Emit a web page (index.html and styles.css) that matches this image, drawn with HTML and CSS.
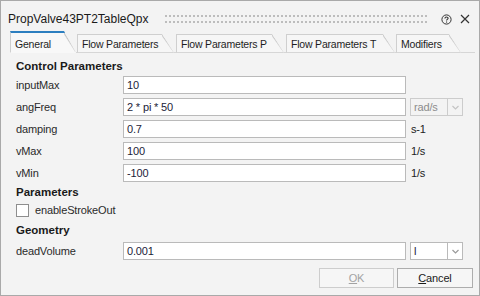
FILE: index.html
```html
<!DOCTYPE html>
<html>
<head>
<meta charset="utf-8">
<link rel="stylesheet" href="styles.css">
</head>
<body>
<div class="window">
  <div class="titlebar">
    <span class="title">PropValve43PT2TableQpx</span>
    <span class="grip"></span>
    <svg class="help" width="11" height="11" viewBox="0 0 11 11">
      <circle cx="5.5" cy="5.5" r="4.6" fill="none" stroke="#333" stroke-width="1"/>
      <path d="M3.9 4.4 C3.9 2.6 7.1 2.6 7.1 4.3 C7.1 5.4 5.5 5.4 5.5 6.6" fill="none" stroke="#333" stroke-width="1.1"/>
      <rect x="5" y="7.5" width="1.1" height="1.1" fill="#333"/>
    </svg>
    <svg class="close" width="10" height="10" viewBox="0 0 10 10">
      <path d="M1 1 L9 9 M9 1 L1 9" stroke="#333" stroke-width="1.2"/>
    </svg>
  </div>
  <div class="tabs">
    <div class="tab active">General</div>
    <div class="tab">Flow Parameters</div>
    <div class="tab">Flow Parameters P</div>
    <div class="tab">Flow Parameters T</div>
    <div class="tab">Modifiers</div>
  </div>
  <div class="pane">
    <div class="section">Control Parameters</div>
    <div class="rows">
      <div class="row"><span class="label">inputMax</span><span class="input">10</span><span class="unit"></span></div>
      <div class="row"><span class="label">angFreq</span><span class="input">2 * pi * 50</span>
        <span class="combo disabled"><span class="combo-text">rad/s</span><span class="combo-btn"><svg width="7" height="5" viewBox="0 0 7 5"><path d="M0.5 1 L3.5 4 L6.5 1" fill="none" stroke="#c4c4c4" stroke-width="1.2"/></svg></span></span></div>
      <div class="row"><span class="label">damping</span><span class="input">0.7</span><span class="unit">s-1</span></div>
      <div class="row"><span class="label">vMax</span><span class="input">100</span><span class="unit">1/s</span></div>
      <div class="row"><span class="label">vMin</span><span class="input">-100</span><span class="unit">1/s</span></div>
    </div>
    <div class="section sec-params">Parameters</div>
    <div class="check-row"><span class="checkbox"></span><span class="check-label">enableStrokeOut</span></div>
    <div class="section sec-geom">Geometry</div>
    <div class="rows rows-geom">
      <div class="row"><span class="label">deadVolume</span><span class="input">0.001</span>
        <span class="combo"><span class="combo-text">l</span><span class="combo-btn"><svg width="7" height="5" viewBox="0 0 7 5"><path d="M0.5 1 L3.5 4 L6.5 1" fill="none" stroke="#9a9a9a" stroke-width="1.2"/></svg></span></span></div>
    </div>
  </div>
  <div class="buttons">
    <span class="btn disabled"><u>O</u>K</span>
    <span class="btn"><u>C</u>ancel</span>
  </div>
</div>
</body>
</html>
```
FILE: styles.css
```css
* { box-sizing: border-box; }
html, body { margin: 0; padding: 0; }
body {
  font-family: "Liberation Sans", Arial, sans-serif;
  font-size: 11px;
  letter-spacing: -0.15px;
  color: #222;
  background: #f3f3f3;
}
.window {
  width: 480px;
  height: 296px;
  border: 1px solid #a9a9a9;
  background: #f3f3f3;
  display: flex;
  flex-direction: column;
}
.titlebar {
  height: 30px;
  padding: 6px 9px 0 7px;
  display: flex;
  align-items: center;
}
.title {
  font-size: 12px;
  letter-spacing: 0;
  color: #1a1a1a;
  line-height: 24px;
}
.grip {
  flex: 1;
  height: 8px;
  margin: 0 12px 0 16px;
  background-image: conic-gradient(at 2px 2px, transparent 0 75%, #bdbdbd 0);
  background-size: 4px 6px;
}
.help { margin-right: 8px; }
.tabs {
  height: 22px;
  margin: 0 4px 0 9px;
  display: flex;
  align-items: flex-end;
  border-bottom: 1px solid #d6d6d6;
}
.tab {
  position: relative;
  height: 19px;
  margin-right: 2px;
  margin-bottom: -1px;
  padding: 2px 0 0 4px;
  border-left: 1px solid #cfcfcf;
  border-top: 1px solid #cfcfcf;
  border-bottom: 1px solid #d6d6d6;
  background: #f6f6f6;
  clip-path: polygon(0 0, calc(100% - 12px) 0, 100% 100%, 0 100%);
  color: #1e1e1e;
  font-size: 10.5px;
  letter-spacing: -0.2px;
  line-height: 14px;
  white-space: nowrap;
}
.tab::after {
  content: "";
  position: absolute;
  top: 0;
  right: 0;
  bottom: 0;
  width: 12px;
  background: linear-gradient(to top right, transparent calc(50% - 1.2px), #c4c4c4 50%, transparent calc(50% + 1.2px));
}
.tab.active {
  height: 22px;
  padding-top: 4px;
  border-top: 2px solid #2d7fc0;
  border-bottom: 1px solid #f8f8f8;
  background: #f8f8f8;
}
.tab:nth-child(1) { width: 66px; margin-right: 1px; }
.tab:nth-child(2) { width: 97px; }
.tab:nth-child(3) { width: 108px; margin-right: 2px; }
.tab:nth-child(4) { width: 109px; margin-right: 1px; }
.tab:nth-child(5) { width: 65px; }
.pane {
  padding: 4px 0 0 15px;
}
.section {
  height: 18px;
  line-height: 18px;
  font-weight: bold;
  font-size: 11.5px;
  letter-spacing: 0;
  color: #1a1a1a;
  margin-bottom: 1px;
}
.rows {
  display: flex;
  flex-direction: column;
  gap: 4px;
}
.row {
  display: grid;
  grid-template-columns: 103px 283px 53px;
  column-gap: 4px;
  height: 18px;
  align-items: center;
}
.label { color: #2a2a2a; line-height: 18px; }
.input {
  height: 18px;
  border: 1px solid #bababa;
  background: #fff;
  padding-left: 3px;
  line-height: 16px;
  color: #1c1c38;
}
.unit { line-height: 18px; color: #222; padding-left: 1px; }
.combo {
  display: flex;
  height: 18px;
  width: 53px;
}
.combo-text {
  width: 38px;
  border: 1px solid #bababa;
  background: #fff;
  padding-left: 3px;
  line-height: 16px;
  color: #1c1c38;
}
.combo-btn {
  width: 15px;
  border: 1px solid #bababa;
  border-left: none;
  background: #fff;
  display: flex;
  align-items: center;
  justify-content: center;
}
.combo.disabled .combo-text,
.combo.disabled .combo-btn {
  border-color: #cccccc;
  background: #f3f3f3;
  color: #8c8c8c;
}
.sec-params { margin-top: 1px; margin-bottom: 0; }
.check-row {
  height: 18px;
  display: flex;
  align-items: center;
}
.checkbox {
  width: 13px;
  height: 13px;
  border: 1px solid #8e8e8e;
  background: #fff;
}
.check-label { margin-left: 6px; color: #2a2a2a; }
.sec-geom { margin-top: 2px; margin-bottom: 3px; }
.buttons {
  margin-top: 8px;
  padding-right: 6px;
  display: flex;
  justify-content: flex-end;
  gap: 3px;
}
.btn {
  width: 75px;
  height: 20px;
  border: 1px solid #adadad;
  background: #f6f6f6;
  text-align: center;
  line-height: 18px;
  color: #1a1a1a;
}
.btn + .btn { width: 76px; }
.btn.disabled {
  border-color: #cdcdcd;
  color: #a3a3a3;
}
```
